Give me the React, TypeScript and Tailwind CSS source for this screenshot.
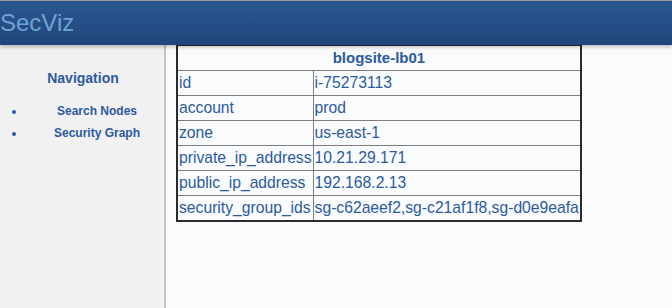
import React from 'react';

const rows: [string, string][] = [
  ['id', 'i-75273113'],
  ['account', 'prod'],
  ['zone', 'us-east-1'],
  ['private_ip_address', '10.21.29.171'],
  ['public_ip_address', '192.168.2.13'],
  ['security_group_ids', 'sg-c62aeef2,sg-c21af1f8,sg-d0e9eafa'],
];

export default function App() {
  return (
    <div className="h-[308px] flex flex-col bg-[#f9fbfd] font-['Liberation_Sans',Arial,sans-serif] text-[#2c5aa0] overflow-hidden">
      {/* Top bar */}
      <header className="relative z-10 h-[45px] border-t border-[#9a9a9a] bg-gradient-to-b from-[#2b5791] to-[#21457b] shadow-[0_2px_4px_rgba(0,0,0,0.25)] flex items-center">
        <span className="text-[24px] text-[#6ea3d3] leading-none -mt-[1px]">SecViz</span>
      </header>

      <div className="flex flex-1">
        {/* Sidebar */}
        <aside className="w-[166px] bg-[#f1f1f1] border-r-2 border-[#c6c6c6] pt-[24px]">
          <h2 className="text-center font-bold text-[14px] leading-[18px] pl-[2px]">Navigation</h2>
          <ul className="mt-[13px] list-disc pl-[26px] text-[12px] font-bold leading-[22px] marker:text-[#2c5aa0]">
            <li className="text-center pl-[4px]">Search Nodes</li>
            <li className="text-center pl-[4px]">Security Graph</li>
          </ul>
        </aside>

        {/* Main */}
        <main className="flex-1 pl-[10px] -mt-[1px]">
          <table className="border-collapse border-2 border-[#2b2b2b] text-[15.7px] leading-[24px]">
            <thead>
              <tr>
                <th colSpan={2} className="border border-[#7d7d7d] text-[15px] font-bold text-center h-[25px]">
                  blogsite-lb01
                </th>
              </tr>
            </thead>
            <tbody>
              {rows.map(([k, v]) => (
                <tr key={k}>
                  <td className="border border-[#7d7d7d] px-[1px]">{k}</td>
                  <td className="border border-[#7d7d7d] px-[1px]">{v}</td>
                </tr>
              ))}
            </tbody>
          </table>
        </main>
      </div>
    </div>
  );
}
